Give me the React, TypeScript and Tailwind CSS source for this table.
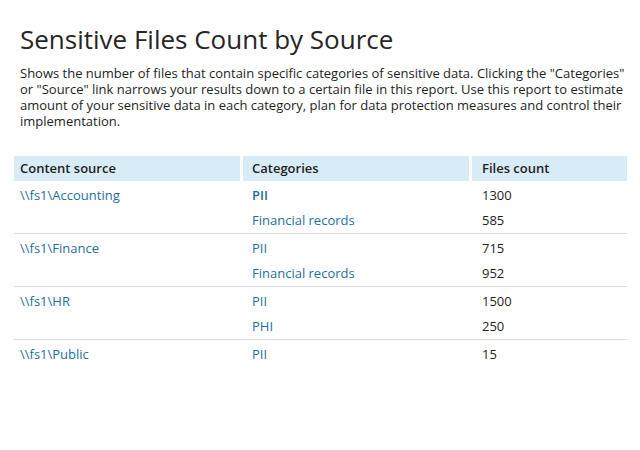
const rows = [
	{ source: "\\\\fs1\\Accounting", items: [{ cat: "PII", count: 1300, bold: true }, { cat: "Financial records", count: 585 }] },
	{ source: "\\\\fs1\\Finance", items: [{ cat: "PII", count: 715 }, { cat: "Financial records", count: 952 }] },
	{ source: "\\\\fs1\\HR", items: [{ cat: "PII", count: 1500 }, { cat: "PHI", count: 250 }] },
	{ source: "\\\\fs1\\Public", items: [{ cat: "PII", count: 15 }] },
]

export default function App() {
	return (
		<div className="w-[640px] h-[450px] bg-white text-[#1e1e1e]" style={{ fontFamily: '"Open Sans", sans-serif' }}>
			<div className="px-5 pt-[21px]">
				<h1 className="text-[26px] leading-[36px] text-[#262626]">Sensitive Files Count by Source</h1>
				<p className="mt-[8px] text-[13px] leading-[16px] w-[610px]">
					Shows the number of files that contain specific categories of sensitive data. Clicking the "Categories" or "Source" link narrows your results down to a certain file in this report. Use this report to estimate amount of your sensitive data in each category, plan for data protection measures and control their implementation.
				</p>
			</div>
			<table className="ml-[14px] mt-[27px] w-[613px] text-[13px] border-separate border-spacing-0">
				<thead>
					<tr className="text-left">
						<th className="w-[229px] bg-[#d8ecf8] h-[25px] px-[6px] font-semibold border-r-[3px] border-white">Content source</th>
						<th className="w-[229px] bg-[#d8ecf8] h-[25px] px-[9px] font-semibold border-r-[3px] border-white">Categories</th>
						<th className="bg-[#d8ecf8] h-[25px] px-[10px] font-semibold">Files count</th>
					</tr>
				</thead>
				{rows.map((g, gi) => (
					<tbody key={gi}>
						{g.items.map((it, i) => {
							const last = i === g.items.length - 1 && gi < rows.length - 1
							const b = last ? "border-b border-[#dcdcdc]" : ""
							const h = i === 0 ? "h-[26px] pt-[5px]" : "h-[27px] pt-[4px]"
							return (
								<tr key={i}>
									<td className={`align-top px-[6px] text-[#1f6f9c] ${h} ${b}`}>
										{i === 0 ? g.source : ""}
									</td>
									<td className={`align-top px-[9px] text-[#1f6f9c] ${it.bold ? "font-semibold" : ""} ${h} ${b}`}>
										{it.cat}
									</td>
									<td className={`align-top px-[10px] ${h} ${b}`}>{it.count}</td>
								</tr>
							)
						})}
					</tbody>
				))}
			</table>
		</div>
	)
}
